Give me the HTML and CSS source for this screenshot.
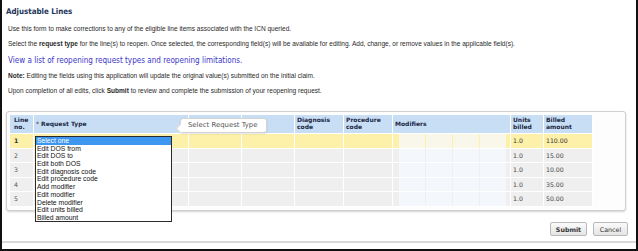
FILE: index.html
```html
<!DOCTYPE html>
<html>
<head>
<meta charset="utf-8">
<link rel="stylesheet" href="styles.css">
</head>
<body>
<div class="frame">
  <h1 class="title">Adjustable Lines</h1>
  <p class="txt l1">Use this form to make corrections to any of the eligible line items associated with the ICN queried.</p>
  <p class="txt l2">Select the <b>request type</b> for the line(s) to reopen. Once selected, the corresponding field(s) will be available for editing. Add, change, or remove values in the applicable field(s).</p>
  <a class="link" href="#">View a list of reopening request types and reopening limitations.</a>
  <p class="txt l3"><b>Note:</b> Editing the fields using this application will update the original value(s) submitted on the initial claim.</p>
  <p class="txt l4">Upon completion of all edits, click <b>Submit</b> to review and complete the submission of your reopening request.</p>
  <div class="panel">
    <table class="grid">
      <colgroup>
        <col class="c-line"><col class="c-type"><col class="c-dos"><col class="c-dos"><col class="c-code"><col class="c-code"><col class="c-mod"><col class="c-units"><col class="c-amt">
      </colgroup>
      <thead>
        <tr>
          <th class="first">Line<br>no.</th>
          <th><span class="req">*</span> Request Type</th>
          <th></th>
          <th></th>
          <th>Diagnosis<br>code</th>
          <th>Procedure<br>code</th>
          <th>Modifiers</th>
          <th>Units<br>billed</th>
          <th>Billed<br>amount</th>
        </tr>
      </thead>
      <tbody>
        <tr class="active">
          <td class="first"><b>1</b></td><td class="type-cell"></td><td></td><td></td><td></td><td></td>
          <td class="mods"><div class="mod-row"><span class="mod"></span><span class="mod"></span><span class="mod"></span><span class="mod"></span></div></td>
          <td class="num">1.0</td><td class="num">110.00</td>
        </tr>
        <tr>
          <td class="first">2</td><td></td><td></td><td></td><td></td><td></td>
          <td class="mods"><div class="mod-row"><span class="mod"></span><span class="mod"></span><span class="mod"></span><span class="mod"></span></div></td>
          <td class="num">1.0</td><td class="num">15.00</td>
        </tr>
        <tr>
          <td class="first">3</td><td></td><td></td><td></td><td></td><td></td>
          <td class="mods"><div class="mod-row"><span class="mod"></span><span class="mod"></span><span class="mod"></span><span class="mod"></span></div></td>
          <td class="num">1.0</td><td class="num">10.00</td>
        </tr>
        <tr>
          <td class="first">4</td><td></td><td></td><td></td><td></td><td></td>
          <td class="mods"><div class="mod-row"><span class="mod"></span><span class="mod"></span><span class="mod"></span><span class="mod"></span></div></td>
          <td class="num">1.0</td><td class="num">35.00</td>
        </tr>
        <tr>
          <td class="first">5</td><td></td><td></td><td></td><td></td><td></td>
          <td class="mods"><div class="mod-row"><span class="mod"></span><span class="mod"></span><span class="mod"></span><span class="mod"></span></div></td>
          <td class="num">1.0</td><td class="num">50.00</td>
        </tr>
      </tbody>
    </table>
    <div class="tooltip">Select Request Type<span class="tip-arrow"></span></div>
    <ul class="dropdown">
      <li class="sel">Select one</li>
      <li>Edit DOS from</li>
      <li>Edit DOS to</li>
      <li>Edit both DOS</li>
      <li>Edit diagnosis code</li>
      <li>Edit procedure code</li>
      <li>Add modifier</li>
      <li>Edit modifier</li>
      <li>Delete modifier</li>
      <li>Edit units billed</li>
      <li>Billed amount</li>
    </ul>
  </div>
  <div class="actions">
    <button class="btn primary">Submit</button>
    <button class="btn">Cancel</button>
  </div>
  <div class="rule"></div>
</div>
</body>
</html>
```
FILE: styles.css
```css
html, body {
  margin: 0;
  padding: 0;
  background: #ffffff;
}
.frame {
  width: 638px;
  height: 251px;
  box-sizing: border-box;
  border-left: 2px solid #111;
  border-right: 2px solid #111;
  border-bottom: 2px solid #111;
  display: flex;
  flex-direction: column;
  padding-top: 7px;
  font-family: "Liberation Sans", Arial, sans-serif;
  color: #222;
}
.title {
  margin: 0 0 0 4px;
  font-size: 7.9px;
  line-height: 10px;
  height: 10px;
  font-weight: bold;
  color: #1d3558;
  font-family: "DejaVu Sans Condensed", "DejaVu Sans", Verdana, sans-serif;
}
.txt {
  margin: 0 0 0 6px;
  font-size: 6.55px;
  line-height: 8px;
  height: 8px;
  white-space: nowrap;
  color: #2a2a2a;
}
.l1 { margin-top: 8px; }
.l2 { margin-top: 7px; }
.link {
  margin: 8px 0 0 6px;
  font-family: "DejaVu Sans Condensed", "DejaVu Sans", Verdana, sans-serif;
  font-size: 8.05px;
  line-height: 10px;
  height: 10px;
  color: #3a36c8;
  text-decoration: none;
  white-space: nowrap;
}
.l3 { margin-top: 6px; }
.l4 { margin-top: 7px; }

.panel {
  position: relative;
  margin: 16px 0 0 4px;
  width: 620px;
  height: 100px;
  box-sizing: border-box;
  border: 1px solid #d0d0d0;
  border-radius: 3px;
  box-shadow: 0 1px 2px rgba(0,0,0,0.18);
  background: #fdfdfd;
  padding: 2px 0 0 2px;
}
.grid {
  border-collapse: separate;
  border-spacing: 1px;
  table-layout: fixed;
  width: 584px;
  font-family: "DejaVu Sans", Verdana, sans-serif;
  background: #ffffff;
}
.c-line { width: 23px; }
.c-type { width: 154px; }
.c-dos { width: 52px; }
.c-code { width: 48px; }
.c-mod { width: 117px; }
.c-units { width: 32px; }
.c-amt { width: 48px; }
.grid th {
  background: #c8def4;
  color: #1a2845;
  font-size: 6px;
  line-height: 6.6px;
  font-weight: bold;
  text-align: left;
  height: 18px;
  padding: 0 0 0 2px;
  vertical-align: middle;
}
.grid th.first, .grid td.first { padding-left: 4px; }
.req { font-weight: normal; }
.grid td {
  background: #efefef;
  height: 13.5px;
  padding: 0 0 0 2px;
  font-size: 6.2px;
  color: #555;
  vertical-align: middle;
}
.grid tr.active td { background: #fdf0a8; color: #333; }
.grid td.num { color: #444; }
.grid td.mods { padding: 0 0 0 6px; }
.mod-row {
  display: flex;
  gap: 1px;
  height: 13.5px;
}
.mod {
  width: 26px;
  height: 100%;
  background: rgba(246, 249, 255, 0.75);
}
.tooltip {
  position: absolute;
  left: 173px;
  top: 6px;
  width: 87px;
  height: 15px;
  box-sizing: border-box;
  background: #fff;
  border: 1px solid #d4d4d4;
  border-radius: 3px;
  box-shadow: 0 1px 2px rgba(0,0,0,0.12);
  font-family: "DejaVu Sans", Verdana, sans-serif;
  font-size: 6.9px;
  line-height: 13px;
  color: #555;
  padding-left: 7px;
  white-space: nowrap;
}
.tip-arrow {
  position: absolute;
  left: -4px;
  top: 6px;
  width: 6px;
  height: 6px;
  background: #fff;
  border-left: 1px solid #d4d4d4;
  border-bottom: 1px solid #d4d4d4;
  transform: rotate(45deg);
}
.dropdown {
  position: absolute;
  left: 28px;
  top: 24px;
  width: 137px;
  height: 86px;
  box-sizing: border-box;
  margin: 0;
  padding: 0;
  list-style: none;
  background: #fff;
  border: 1px solid #2a2a2a;
  font-family: "Liberation Sans", Arial, sans-serif;
  font-size: 6.8px;
  line-height: 7.7px;
  color: #111;
  z-index: 2;
}
.dropdown li { padding-left: 1px; height: 7.7px; }
.dropdown li.sel { background: #3d96f0; color: #fff; }

.actions {
  display: flex;
  justify-content: flex-end;
  gap: 6px;
  margin: 11px 8px 0 0;
}
.btn {
  height: 14px;
  box-sizing: border-box;
  padding: 0;
  border: 1px solid #b9b9b9;
  border-radius: 2px;
  background: linear-gradient(#fbfbfb, #e4e4e4);
  font-family: "DejaVu Sans", Verdana, sans-serif;
  font-size: 6.3px;
  color: #333;
  width: 35px;
}
.btn.primary { width: 37px; font-weight: bold; }
.rule {
  margin-top: 5px;
  height: 2px;
  background: #d9d9d9;
}
```
